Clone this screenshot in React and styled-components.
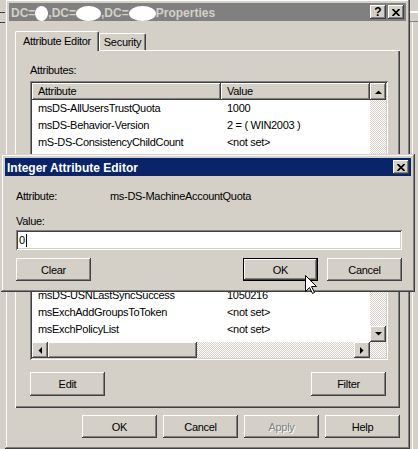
import React from "react";
import styled, { createGlobalStyle } from "styled-components";

const face = "#d4d0c8";
const shadow = "#808080";
const dark = "#404040";

const raised = `
  box-shadow: inset -1px -1px ${dark}, inset 1px 1px #fff, inset -2px -2px ${shadow}, inset 2px 2px ${face};
`;
const sunken = `
  box-shadow: inset 1px 1px ${shadow}, inset -1px -1px #fff, inset 2px 2px ${dark}, inset -2px -2px ${face};
`;
const checker = `
  background-color: #fff;
  background-image: repeating-conic-gradient(#fff 0% 25%, ${face} 0% 50%);
  background-size: 2px 2px;
`;

const GlobalStyle = createGlobalStyle`
  html, body {
    margin: 0;
    padding: 0;
    background: ${face};
  }
  body {
    font-family: "Liberation Sans", Arial, sans-serif;
    font-size: 11px;
    letter-spacing: -0.3px;
    color: #000;
  }
`;

const Desktop = styled.div`
  position: relative;
  width: 418px;
  height: 449px;
  overflow: hidden;
  background: ${face};
`;

const LeftBack = styled.div`
  position: absolute;
  left: -10px;
  top: 12px;
  width: 17px;
  height: 11px;
  box-sizing: border-box;
  border: 1px solid ${dark};
  border-left: none;
  background: ${face};
`;

const RightBack = styled.div`
  position: absolute;
  left: 410px;
  top: 0;
  width: 8px;
  height: 449px;
  box-sizing: border-box;
  padding-top: 11px;
  background: ${face};
`;

const RightBar = styled.div`
  height: 9px;
  border-top: 1px solid #fff;
  border-bottom: 1px solid ${shadow};
  box-shadow: 0 3px 0 -2px #fff inset;
`;

const RightEdge = styled.div`
  margin-left: 2px;
  height: 430px;
  border-left: 1px solid #fff;
`;

const Window = styled.div`
  position: absolute;
  left: ${(p) => p.$x}px;
  top: ${(p) => p.$y}px;
  width: ${(p) => p.$w}px;
  height: ${(p) => (p.$h ? `${p.$h}px` : "auto")};
  box-sizing: border-box;
  padding: 4px;
  display: flex;
  flex-direction: column;
  background: ${face};
  box-shadow: inset -1px -1px ${dark}, inset 1px 1px ${face},
    inset -2px -2px ${shadow}, inset 2px 2px #fff;
  z-index: ${(p) => p.$z || 1};
`;

const TitleBar = styled.div`
  flex: none;
  height: 18px;
  display: flex;
  align-items: center;
  gap: 2px;
  padding: 0 2px;
  background: ${(p) => (p.$active ? "#0a246a" : shadow)};
  color: ${(p) => (p.$active ? "#fff" : face)};
  font-size: 12px;
  font-weight: bold;
  letter-spacing: 0;
`;

const TitleText = styled.div`
  flex: 1;
  display: flex;
  align-items: center;
  white-space: nowrap;
  overflow: hidden;
  padding-top: 1px;
`;

const Blot = styled.span`
  display: inline-block;
  width: ${(p) => p.$w}px;
  height: 15px;
  margin-top: 1px;
  border-radius: 50%;
  background: #fff;
`;

const CaptionButton = styled.div`
  flex: none;
  width: 16px;
  height: 14px;
  display: flex;
  align-items: center;
  justify-content: center;
  background: ${face};
  color: #000;
  font-size: 12px;
  font-weight: bold;
  line-height: 14px;
  ${raised}
`;

const CloseGlyph = () => (
  <svg width="8" height="7" viewBox="0 0 8 7" style={{ display: "block" }}>
    <path d="M0.5 0 L7.5 7 M7.5 0 L0.5 7" stroke="#000" strokeWidth="1.7" fill="none" />
  </svg>
);

const WindowBody = styled.div`
  flex: 1;
  display: flex;
  flex-direction: column;
  padding: 10px 6px 0 6px;
`;

const TabStrip = styled.div`
  position: relative;
  z-index: 2;
  display: flex;
  align-items: flex-end;
  height: 20px;
  margin-bottom: -1px;
`;

const Tab = styled.div`
  box-sizing: border-box;
  width: ${(p) => p.$w}px;
  height: ${(p) => (p.$selected ? 20 : 17)}px;
  margin-bottom: ${(p) => (p.$selected ? 0 : 1)}px;
  padding-top: ${(p) => (p.$selected ? 3 : 2)}px;
  text-align: center;
  line-height: 13px;
  background: ${face};
  border-top: 1px solid #fff;
  border-left: 1px solid #fff;
  border-right: 1px solid ${dark};
  border-radius: 2px 2px 0 0;
  box-shadow: inset -1px 0 ${shadow};
`;

const TabPanel = styled.div`
  box-sizing: border-box;
  height: 358px;
  display: flex;
  flex-direction: column;
  padding: 14px 12px 12px 15px;
  box-shadow: inset 1px 1px #fff, inset -1px -1px ${dark}, inset -2px -2px ${shadow};
`;

const Label = styled.div`
  line-height: 13px;
  height: 13px;
  margin-bottom: ${(p) => p.$mb || 0}px;
`;

const ListView = styled.div`
  box-sizing: border-box;
  height: 279px;
  padding: 2px;
  display: grid;
  grid-template-columns: 1fr 16px;
  grid-template-rows: 1fr 16px;
  background: #fff;
  ${sunken}
`;

const ListMain = styled.div`
  overflow: hidden;
  display: flex;
  flex-direction: column;
  background: #fff;
`;

const HeaderRow = styled.div`
  display: flex;
  flex: none;
  height: 17px;
`;

const HeadCell = styled.div`
  box-sizing: border-box;
  flex: none;
  width: ${(p) => p.$w}px;
  height: 17px;
  line-height: 17px;
  padding: 0 6px;
  background: ${face};
  box-shadow: inset -1px -1px ${dark}, inset 1px 1px #fff, inset -2px -2px ${shadow};
`;

const Row = styled.div`
  display: flex;
  flex: none;
  height: 17px;
  line-height: 17px;
  white-space: nowrap;
`;

const Cell = styled.div`
  flex: none;
  box-sizing: border-box;
  width: ${(p) => p.$w}px;
  padding: 0 6px;
  overflow: hidden;
`;

const VScroll = styled.div`
  display: flex;
  flex-direction: column;
`;

const HScroll = styled.div`
  display: flex;
`;

const Track = styled.div`
  flex: 1;
  position: relative;
  ${checker}
`;

const ScrollButton = styled.div`
  box-sizing: border-box;
  flex: none;
  width: ${(p) => p.$w || 16}px;
  height: ${(p) => p.$h || 16}px;
  display: flex;
  align-items: center;
  justify-content: center;
  background: ${face};
  ${raised}
`;

const Thumb = styled.div`
  box-sizing: border-box;
  flex: none;
  width: ${(p) => (p.$w ? `${p.$w}px` : "auto")};
  height: ${(p) => (p.$h ? `${p.$h}px` : "auto")};
  margin-top: ${(p) => p.$mt || 0}px;
  background: ${face};
  ${raised}
`;

const Corner = styled.div`
  ${checker}
`;

const Arrow = ({ dir }) => {
  const pts = {
    up: "0,4 7,4 3.5,0.5",
    down: "0,0 7,0 3.5,3.5",
    left: "4,0 4,7 0.5,3.5",
    right: "0,0 0,7 3.5,3.5",
  }[dir];
  const vertical = dir === "up" || dir === "down";
  return (
    <svg
      width={vertical ? 7 : 4}
      height={vertical ? 4 : 7}
      viewBox={vertical ? "0 0 7 4" : "0 0 4 7"}
      style={{ display: "block" }}
    >
      <polygon points={pts} fill="#000" />
    </svg>
  );
};

const ButtonRow = styled.div`
  display: flex;
  justify-content: ${(p) => p.$justify || "space-between"};
  gap: ${(p) => p.$gap || 0}px;
  margin-top: ${(p) => p.$mt || 0}px;
  padding-right: ${(p) => p.$pr || 0}px;
`;

const Spacer = styled.div`
  flex: 1;
`;

const Button = styled.div`
  box-sizing: border-box;
  flex: none;
  width: 75px;
  height: ${(p) => p.$h || 23}px;
  display: flex;
  align-items: center;
  justify-content: center;
  background: ${face};
  border: ${(p) => (p.$default ? "1px solid #000" : "none")};
  color: ${(p) => (p.$disabled ? shadow : "#000")};
  text-shadow: ${(p) => (p.$disabled ? "1px 1px #fff" : "none")};
  ${raised}
`;

const DialogBody = styled.div`
  display: flex;
  flex-direction: column;
  padding: 14px 9px 7px 11px;
`;

const AttrLine = styled.div`
  display: grid;
  grid-template-columns: 94px 1fr;
  line-height: 13px;
  height: 13px;
  margin-bottom: 12px;
`;

const Field = styled.div`
  box-sizing: border-box;
  height: 20px;
  display: flex;
  align-items: center;
  padding: 0 3px;
  background: #fff;
  ${sunken}
`;

const Caret = styled.span`
  display: inline-block;
  width: 1px;
  height: 13px;
  margin-left: 1px;
  background: #000;
`;

const Pointer = styled.svg`
  position: absolute;
  left: 305px;
  top: 275px;
  z-index: 5;
  display: block;
`;

const rows = [
  ["msDS-AllUsersTrustQuota", "1000"],
  ["msDS-Behavior-Version", "2 = ( WIN2003 )"],
  ["mS-DS-ConsistencyChildCount", "<not set>"],
  ["mS-DS-ConsistencyGuid", "<not set>"],
  ["msDS-LogonTimeSyncInterval", "<not set>"],
  ["ms-DS-MachineAccountQuota", "10"],
  ["msDS-PerUserTrustQuota", "1"],
  ["msDS-PerUserTrustTombstonesQuota", "10"],
  ["msDS-ReplAllInboundNeighbors", "<not set>"],
  ["msDS-ReplicationEpoch", "<not set>"],
  ["msDS-TasksForAzTaskBL", "<not set>"],
  ["msDS-USNLastSyncSuccess", "1050216"],
  ["msExchAddGroupsToToken", "<not set>"],
  ["msExchPolicyList", "<not set>"],
  ["msExchPolicyListBL", "<not set>"],
];

export default function App() {
  return (
    <>
      <GlobalStyle />
      <Desktop>
        <LeftBack />
        <RightBack>
          <RightBar />
          <RightEdge />
        </RightBack>

        <Window $x={5} $y={-1} $w={405} $h={450}>
          <TitleBar>
            <TitleText>
              DC=<Blot $w={13} />,DC=<Blot $w={25} />,DC=<Blot $w={27} />Properties
            </TitleText>
            <CaptionButton>?</CaptionButton>
            <CaptionButton>
              <CloseGlyph />
            </CaptionButton>
          </TitleBar>
          <WindowBody>
            <TabStrip>
              <Tab $selected $w={84}>Attribute Editor</Tab>
              <Tab $w={47}>Security</Tab>
            </TabStrip>
            <TabPanel>
              <Label $mb={4}>Attributes:</Label>
              <ListView>
                <ListMain>
                  <HeaderRow>
                    <HeadCell $w={189}>Attribute</HeadCell>
                    <HeadCell $w={149}>Value</HeadCell>
                  </HeaderRow>
                  {rows.map(([name, value]) => (
                    <Row key={name}>
                      <Cell $w={189}>{name}</Cell>
                      <Cell $w={149}>{value}</Cell>
                    </Row>
                  ))}
                </ListMain>
                <VScroll>
                  <ScrollButton $h={17}>
                    <Arrow dir="up" />
                  </ScrollButton>
                  <Track>
                    <Thumb $h={90} $mt={70} />
                  </Track>
                  <ScrollButton>
                    <Arrow dir="down" />
                  </ScrollButton>
                </VScroll>
                <HScroll>
                  <ScrollButton>
                    <Arrow dir="left" />
                  </ScrollButton>
                  <Thumb $w={149} />
                  <Track />
                  <ScrollButton>
                    <Arrow dir="right" />
                  </ScrollButton>
                </HScroll>
                <Corner />
              </ListView>
              <ButtonRow $mt={12} $pr={2}>
                <Button $h={24}>Edit</Button>
                <Button $h={24}>Filter</Button>
              </ButtonRow>
            </TabPanel>
            <ButtonRow $mt={7} $gap={6} $justify="flex-end" $pr={-1}>
              <Button>OK</Button>
              <Button>Cancel</Button>
              <Button $disabled>Apply</Button>
              <Button>Help</Button>
            </ButtonRow>
          </WindowBody>
        </Window>

        <Window $x={1} $y={154} $w={414} $z={3}>
          <TitleBar $active>
            <TitleText>Integer Attribute Editor</TitleText>
            <CaptionButton>
              <CloseGlyph />
            </CaptionButton>
          </TitleBar>
          <DialogBody>
            <AttrLine>
              <span>Attribute:</span>
              <span>ms-DS-MachineAccountQuota</span>
            </AttrLine>
            <Label $mb={2}>Value:</Label>
            <Field>
              0<Caret />
            </Field>
            <ButtonRow $mt={8} $gap={9}>
              <Button>Clear</Button>
              <Spacer />
              <Button $default>OK</Button>
              <Button>Cancel</Button>
            </ButtonRow>
          </DialogBody>
        </Window>

        <Pointer width="13" height="20" viewBox="0 0 13 20">
          <polygon
            points="0.5,0.5 0.5,16.5 4.5,12.5 7.5,18.5 9.5,17.5 6.5,11.5 11.5,11.5"
            fill="#fff"
            stroke="#000"
            strokeWidth="1"
          />
        </Pointer>
      </Desktop>
    </>
  );
}
